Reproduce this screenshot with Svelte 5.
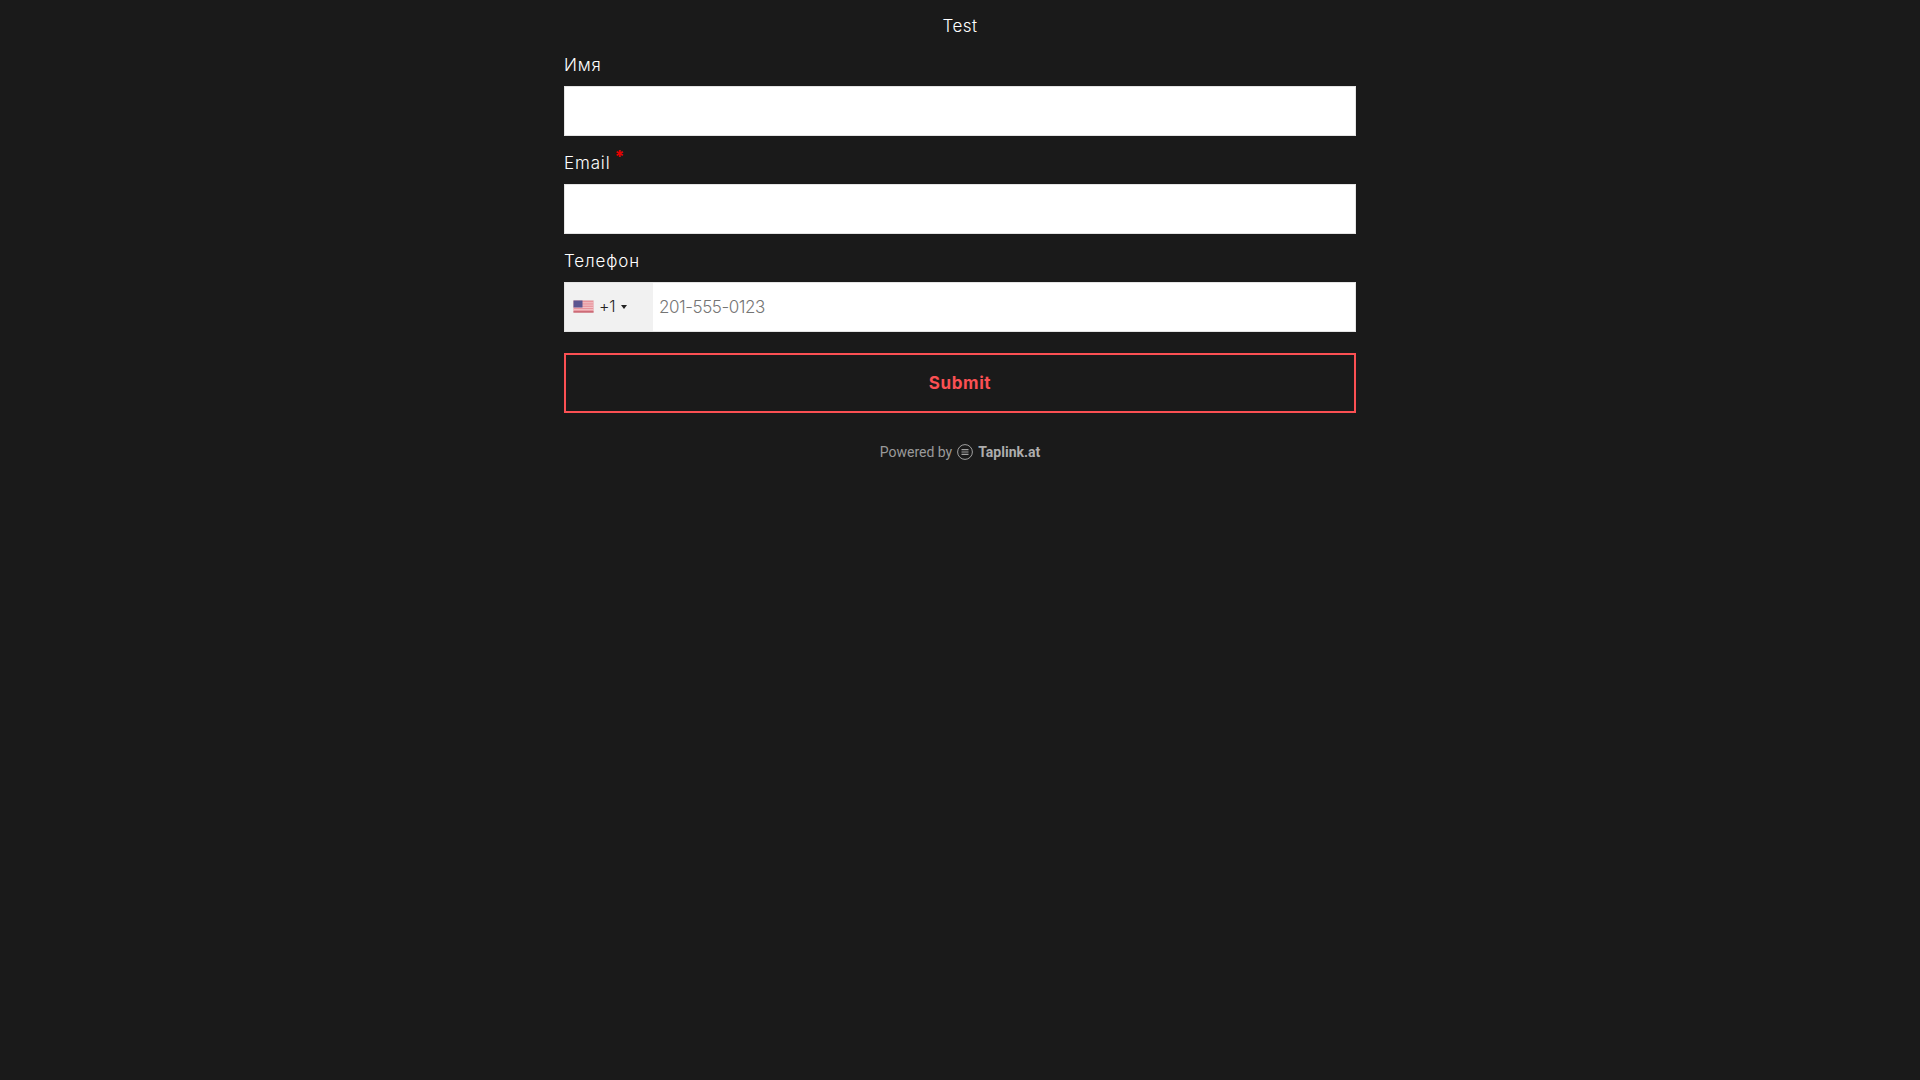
<script>
	let fields = [
		{ label: 'Имя', type: 'text' },
		{ label: 'Email', type: 'email', required: true }
	];
</script>

<div class="page">
	<form class="form" on:submit|preventDefault>
		<div class="title">Test</div>
		{#each fields as field}
			<div class="field">
				<label>
					<span class="label">{field.label}{#if field.required}<i class="req">*</i>{/if}</span>
					<input type={field.type} />
				</label>
			</div>
		{/each}
		<div class="field">
			<label>
				<span class="label">Телефон</span>
				<span class="phone">
					<span class="country">
						<svg class="flag" viewBox="0 0 21 13" width="21" height="13">
							<rect width="21" height="13" fill="#e9e9e9" />
							<rect x="0.5" y="0.5" width="20" height="12" fill="#e8939b" />
							<rect x="0.5" y="2.3" width="20" height="1" fill="#f3c6ca" />
							<rect x="0.5" y="4.6" width="20" height="1" fill="#f3c6ca" />
							<rect x="0.5" y="6.9" width="20" height="1" fill="#f3c6ca" />
							<rect x="0.5" y="9.2" width="20" height="1" fill="#f3c6ca" />
							<rect x="0.5" y="11.3" width="20" height="1.2" fill="#c25a68" />
							<rect x="0.5" y="0.5" width="9" height="7" fill="#5b5590" />
						</svg>
						<span class="code">+1</span>
						<span class="caret"></span>
					</span>
					<input type="tel" placeholder="201-555-0123" />
				</span>
			</label>
		</div>
		<button type="submit">Submit</button>
	</form>
	<div class="powered">
		Powered by
		<svg viewBox="0 0 16 16" width="16" height="16">
			<circle cx="8" cy="8" r="7.4" fill="none" stroke="#a0a0a0" stroke-width="1" />
			<path d="M4.5 5.6h7M4.5 8h7M4.5 10.4h7" stroke="#a0a0a0" stroke-width="1.1" />
		</svg>
		<b>Taplink.at</b>
	</div>
</div>

<style>
	:global(body) {
		margin: 0;
		background: #1a1a1a;
	}

	.page {
		min-height: 1080px;
		display: flex;
		flex-direction: column;
		align-items: center;
		font-family: Inter, 'Noto Sans', sans-serif;
		color: #fff;
	}

	.form {
		width: 792px;
		display: flex;
		flex-direction: column;
	}

	.title {
		height: 52px;
		line-height: 52px;
		text-align: center;
		font-size: 17px;
		font-weight: 300;
		letter-spacing: 0.4px;
	}

	label {
		display: block;
	}

	.label {
		display: block;
		height: 34px;
		line-height: 26px;
		font-size: 17px;
		font-weight: 300;
		letter-spacing: 0.85px;
	}

	.field + .field {
		margin-top: 14px;
	}

	.req {
		color: #e60000;
		font-style: normal;
		font-weight: 800;
		font-size: 17px;
		margin-left: 4px;
		line-height: 0;
		vertical-align: 6px;
	}

	input {
		display: block;
		box-sizing: border-box;
		width: 100%;
		height: 50px;
		margin: 0;
		padding: 0 5px;
		border: 1px solid #e4e4e4;
		border-radius: 0;
		background: #fff;
		outline: none;
		font-family: inherit;
		font-size: 17px;
		font-weight: 300;
	}

	input::placeholder {
		color: #757575;
		opacity: 1;
		letter-spacing: -0.45px;
	}

	.phone {
		display: flex;
		height: 50px;
		box-sizing: border-box;
		border: 1px solid #e4e4e4;
		background: #fff;
	}

	.phone input {
		flex: 1;
		min-width: 0;
		height: 48px;
		border: 0;
		padding-left: 6px;
	}

	.country {
		width: 88px;
		flex: none;
		display: flex;
		align-items: center;
		padding-left: 8px;
		padding-bottom: 1px;
		box-sizing: border-box;
		background: #f1f1f1;
		color: #222;
	}

	.code {
		margin-left: 5px;
		margin-top: -1px;
		font-size: 16px;
		font-weight: 300;
		letter-spacing: -0.2px;
	}

	.caret {
		margin-left: 6px;
		border-top: 4px solid #222;
		border-left: 3px solid transparent;
		border-right: 3px solid transparent;
	}

	button {
		margin-top: 21px;
		height: 60px;
		padding: 0 0 1px;
		box-sizing: border-box;
		border: 2px solid #fb5053;
		border-radius: 0;
		background: transparent;
		color: #fb5053;
		font-family: inherit;
		font-size: 17px;
		font-weight: 700;
		letter-spacing: 0.6px;
		cursor: pointer;
	}

	.powered {
		margin-top: 30px;
		display: flex;
		align-items: center;
		gap: 5px;
		height: 18px;
		font-family: Roboto, sans-serif;
		font-size: 14px;
		color: #9a9a9a;
	}

	.powered b {
		color: #adadad;
		font-weight: 700;
	}
</style>
